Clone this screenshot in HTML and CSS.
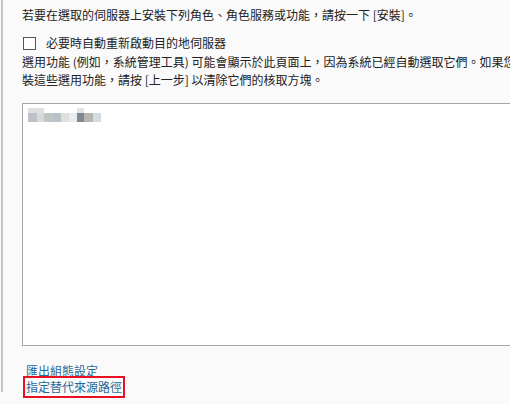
FILE: index.html
```html
<!DOCTYPE html>
<html lang="zh-Hant">
<head>
    <meta charset="UTF-8">
    <title>確認安裝選項</title>
    <link rel="stylesheet" href="styles.css">
</head>
<body>
    <div class="page">
        <p class="intro">若要在選取的伺服器上安裝下列角色、角色服務或功能，請按一下 [安裝]。</p>
        <label class="restart"><span class="check"></span>必要時自動重新啟動目的地伺服器</label>
        <p class="note">選用功能 (例如，系統管理工具) 可能會顯示於此頁面上，因為系統已經自動選取它們。如果您不想安裝這些選用功能，請按 [上一步] 以清除它們的核取方塊。</p>
        <div class="list">
            <div class="blur">
                <div class="row top">
                    <i style="width:16px;background:#e2dedb"></i><i style="width:33px;background:transparent"></i><i style="width:7px;background:#e6e1dc"></i>
                </div>
                <div class="row">
                    <i style="width:9px;background:#bcc1c9"></i><i style="width:7px;background:#d9d9d9"></i><i style="width:9px;background:#c0c5c5"></i><i style="width:8px;background:#b9c1cb"></i><i style="width:8px;background:#e2dfdb"></i><i style="width:8px;background:#e6edf1"></i><i style="width:7px;background:#808892"></i><i style="width:9px;background:#b5b5b1"></i><i style="width:8px;background:#d6dae2"></i>
                </div>
            </div>
        </div>
        <div class="links">
            <a href="#">匯出組態設定</a>
            <a href="#" class="marked">指定替代來源路徑</a>
        </div>
    </div>
</body>
</html>
```
FILE: styles.css
```css
*{
    margin:0;padding:0;
}
html,body{
    width:100%;
    height:100%;
    overflow:hidden;
    background-color:#fafafa;
    color:#222;
    font-family:"Noto Sans CJK TC","Liberation Sans",sans-serif;
    font-size:12px;
}
.page{
    width:560px;
    height:392px;
    margin-left:1px;
    padding-left:19px;
    border-left:2px solid #c4c4c4;
    box-sizing:border-box;
}
.intro{
    padding-top:6px;
    line-height:18px;
}
.restart{
    display:flex;
    align-items:center;
    margin-top:10px;
    line-height:18px;
}
.check{
    width:11px;
    height:11px;
    margin-left:1px;
    margin-right:10px;
    border:1px solid #555;
    background-color:#fff;
}
.note{
    width:532px;
    margin-top:1px;
    line-height:18px;
}
.list{
    height:243px;
    margin-top:14px;
    border:1px solid #a6a6a6;
    background-color:#fff;
    box-sizing:border-box;
}
.blur{
    padding:4px 0 0 5px;
}
.row{
    display:flex;
    height:9px;
}
.row.top{
    height:5px;
}
.row i{
    display:block;
    height:100%;
}
.links{
    display:flex;
    flex-direction:column;
    align-items:flex-start;
    margin-top:17px;
    padding-left:4px;
}
.links a{
    color:#1f6a9a;
    text-decoration:none;
    line-height:16px;
}
.marked{
    outline:2px solid #e81123;
    outline-offset:1px;
}
```
